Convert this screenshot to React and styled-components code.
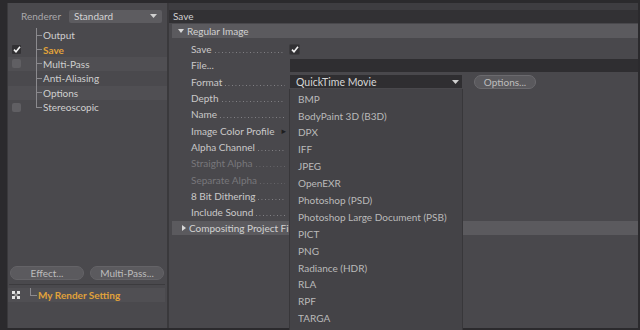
import React from 'react';
import styled, { createGlobalStyle } from 'styled-components';

const GlobalStyle = createGlobalStyle`
  html, body {
    margin: 0;
    padding: 0;
    background: #1f1f21;
  }
  * {
    box-sizing: border-box;
  }
`;

const treeItems = [
  { label: 'Output', box: null },
  { label: 'Save', box: 'checked', active: true },
  { label: 'Multi-Pass', box: 'empty', stripe: true },
  { label: 'Anti-Aliasing', box: null },
  { label: 'Options', box: null, stripe: true },
  { label: 'Stereoscopic', box: 'empty', last: true },
];

const formats = [
  'BMP',
  'BodyPaint 3D (B3D)',
  'DPX',
  'IFF',
  'JPEG',
  'OpenEXR',
  'Photoshop (PSD)',
  'Photoshop Large Document (PSB)',
  'PICT',
  'PNG',
  'Radiance (HDR)',
  'RLA',
  'RPF',
  'TARGA',
];

const Check = () => (
  <svg width="8" height="7" viewBox="0 0 8 7">
    <path d="M1 3.6 L3 5.8 L7 0.8" fill="none" stroke="#f2f2f2" strokeWidth="1.6" />
  </svg>
);

const Caret = () => (
  <svg width="7" height="4" viewBox="0 0 7 4">
    <path d="M0 0 L7 0 L3.5 4 Z" fill="#d0d0d0" />
  </svg>
);

const SettingIcon = () => (
  <svg width="8" height="8" viewBox="0 0 8 8">
    <rect x="0" y="0" width="3" height="3" fill="#e6e6e6" />
    <rect x="5" y="0" width="3" height="3" fill="#e6e6e6" />
    <rect x="2.5" y="2.5" width="3" height="3" fill="#9a9a9a" />
    <rect x="0" y="5" width="3" height="3" fill="#e6e6e6" />
    <rect x="5" y="5" width="3" height="3" fill="#e6e6e6" />
  </svg>
);

const App = () => {
  return (
    <>
      <GlobalStyle />
      <Window>
        <LeftPanel>
          <RendererRow>
            <RendererLabel>Renderer</RendererLabel>
            <RendererSelect>
              Standard
              <Caret />
            </RendererSelect>
          </RendererRow>

          <Tree>
            {treeItems.map((item) => (
              <TreeRow key={item.label} $stripe={item.stripe}>
                <BoxCell>
                  {item.box === 'checked' && (
                    <DarkBox>
                      <Check />
                    </DarkBox>
                  )}
                  {item.box === 'empty' && <EmptyBox />}
                </BoxCell>
                <Branch $last={item.last} />
                <TreeLabel $active={item.active}>{item.label}</TreeLabel>
              </TreeRow>
            ))}
          </Tree>

          <Spacer />

          <ButtonRow>
            <PillButton>Effect...</PillButton>
            <PillButton>Multi-Pass...</PillButton>
          </ButtonRow>
          <Separator />
          <SettingRow>
            <BoxCell $narrow>
              <SettingIcon />
            </BoxCell>
            <Branch $last $small />
            <TreeLabel $active>My Render Setting</TreeLabel>
          </SettingRow>
        </LeftPanel>

        <PanelDivider />

        <RightPanel>
          <TopGap />
          <PanelHeader>Save</PanelHeader>
          <GroupBar>
            <Triangle $open />
            Regular Image
          </GroupBar>

          <Params>
            <ParamLabel>
              Save<Leader />
            </ParamLabel>
            <ParamValue>
              <DarkBox $edge>
                <Check />
              </DarkBox>
            </ParamValue>

            <ParamLabel>
              File...
            </ParamLabel>
            <ParamValue>
              <FileField />
            </ParamValue>

            <ParamLabel>
              Format<Leader />
            </ParamLabel>
            <ParamValue>
              <SelectWrap>
                <FormatSelect>
                  QuickTime Movie
                  <Caret />
                </FormatSelect>
                <Popup>
                  {formats.map((f) => (
                    <PopupItem key={f}>{f}</PopupItem>
                  ))}
                </Popup>
              </SelectWrap>
              <OptionsButton>Options...</OptionsButton>
            </ParamValue>

            <ParamLabel>
              Depth<Leader />
            </ParamLabel>
            <ParamValue />

            <ParamLabel>
              Name<Leader />
            </ParamLabel>
            <ParamValue />

            <ParamLabel>
              Image Color Profile
              <SubArrow>▸</SubArrow>
            </ParamLabel>
            <ParamValue />

            <ParamLabel>
              Alpha Channel<Leader />
            </ParamLabel>
            <ParamValue />

            <ParamLabel $dim>
              Straight Alpha<Leader $dim />
            </ParamLabel>
            <ParamValue />

            <ParamLabel $dim>
              Separate Alpha<Leader $dim />
            </ParamLabel>
            <ParamValue />

            <ParamLabel>
              8 Bit Dithering<Leader />
            </ParamLabel>
            <ParamValue />

            <ParamLabel>
              Include Sound<Leader />
            </ParamLabel>
            <ParamValue />
          </Params>

          <GroupBar $collapsed>
            <Triangle />
            Compositing Project File
          </GroupBar>
        </RightPanel>
        <RightEdge />
      </Window>
    </>
  );
};

export default App;

const Window = styled.div`
  width: 640px;
  height: 330px;
  display: flex;
  background: #2b2a2d;
  padding: 3px 0 2px 7px;
  overflow: hidden;
  font-family: Lato, 'Open Sans', 'DejaVu Sans', sans-serif;
  font-size: 10px;
  color: #c8c8c8;
`;

const LeftPanel = styled.div`
  width: 160px;
  display: flex;
  flex-direction: column;
  background: #4a494d;
  border-left: 1px solid #3a393c;
`;

const RendererRow = styled.div`
  height: 25px;
  display: flex;
  align-items: center;
  padding: 0 5px 0 13px;
  gap: 8px;
`;

const RendererLabel = styled.span`
  color: #a9a8ab;
  font-size: 10px;
`;

const RendererSelect = styled.div`
  flex: 1;
  height: 13px;
  margin-top: 1px;
  display: flex;
  align-items: center;
  justify-content: space-between;
  padding: 0 5px 0 5px;
  background: #5d5c60;
  border-radius: 2px;
  color: #d4d4d4;
  font-size: 10px;
`;

const Tree = styled.div`
  display: flex;
  flex-direction: column;
`;

const TreeRow = styled.div`
  height: 14.4px;
  display: flex;
  align-items: stretch;
  background: ${(p) => (p.$stripe ? '#504f53' : 'transparent')};
`;

const BoxCell = styled.div`
  width: ${(p) => (p.$narrow ? '22px' : '28px')};
  display: flex;
  align-items: center;
  padding-left: 4px;
`;

const Branch = styled.span`
  width: ${(p) => (p.$small ? '7px' : '6px')};
  flex-shrink: 0;
  background:
    linear-gradient(#8b8a8e, #8b8a8e) left top / 1px ${(p) => (p.$last ? '50%' : '100%')} no-repeat,
    linear-gradient(#8b8a8e, #8b8a8e) left center / 100% 1px no-repeat;
`;

const TreeLabel = styled.span`
  display: flex;
  align-items: center;
  padding-left: 1px;
  color: ${(p) => (p.$active ? '#e0a23a' : '#cfcfcf')};
  font-weight: ${(p) => (p.$active ? 700 : 400)};
`;

const DarkBox = styled.span`
  width: 9px;
  height: 9px;
  display: inline-flex;
  align-items: center;
  justify-content: center;
  background: #323134;
  border-radius: 1px;
  box-shadow: ${(p) => (p.$edge ? '0 0 0 1px #3c3b3e' : 'none')};
`;

const EmptyBox = styled.span`
  width: 9px;
  height: 9px;
  display: inline-block;
  background: #605f63;
  border-radius: 2px;
`;

const Spacer = styled.div`
  flex: 1;
`;

const ButtonRow = styled.div`
  display: flex;
  gap: 6px;
  padding: 0 3px 0 2px;
  margin-bottom: 4px;
`;

const PillButton = styled.button`
  flex: 1;
  height: 14px;
  padding: 0;
  border: 1px solid #646367;
  border-radius: 7px;
  background: #5b5a5e;
  color: #bdbdbd;
  font-family: inherit;
  font-size: 10px;
  line-height: 12px;
`;

const Separator = styled.div`
  height: 1px;
  margin: 0 2px 3px 1px;
  background: #3c3b3e;
`;

const SettingRow = styled.div`
  height: 14px;
  display: flex;
  align-items: stretch;
  margin: 0 2px 26px 0;
  background: #504f53;
`;

const PanelDivider = styled.div`
  width: 2px;
  background: #3a393c;
`;

const RightPanel = styled.div`
  flex: 1;
  display: flex;
  flex-direction: column;
  background: #49484c;
`;

const RightEdge = styled.div`
  width: 2px;
  background: #2b2a2d;
`;

const TopGap = styled.div`
  height: 7px;
  background: #3e3d41;
`;

const PanelHeader = styled.div`
  height: 13px;
  display: flex;
  align-items: center;
  padding: 0 0 1px 4px;
  background: #323134;
  color: #d0d0d0;
  margin-bottom: 1px;
`;

const GroupBar = styled.div`
  height: 14px;
  display: flex;
  align-items: center;
  gap: 3px;
  margin-left: 3px;
  padding-left: ${(p) => (p.$collapsed ? '10px' : '6px')};
  background: #5b5a5e;
  color: #d2d2d2;
`;

const Triangle = styled.span`
  width: 0;
  height: 0;
  border-style: solid;
  border-color: transparent;
  ${(p) =>
    p.$open
      ? `border-width: 4px 3px 0 3px; border-top-color: #d8d8d8;`
      : `border-width: 3px 0 3px 4px; border-left-color: #d8d8d8;`}
`;

const Params = styled.div`
  display: grid;
  grid-template-columns: 97px 1fr;
  grid-auto-rows: 16.3px;
  column-gap: 2px;
  padding: 3px 0 1px 22px;
`;

const ParamLabel = styled.div`
  display: flex;
  align-items: center;
  white-space: nowrap;
  color: ${(p) => (p.$dim ? '#78777b' : '#c9c9c9')};
`;

const Leader = styled.span`
  flex: 1;
  align-self: stretch;
  margin: 0 3px 4px 3px;
  background-image: linear-gradient(to right, ${(p) => (p.$dim ? '#67666a' : '#858488')} 1px, transparent 1px);
  background-size: 3.5px 1px;
  background-repeat: repeat-x;
  background-position: left bottom;
`;

const SubArrow = styled.span`
  margin-left: auto;
  margin-right: 2px;
  font-size: 9px;
  color: #1e1e20;
`;

const ParamValue = styled.div`
  display: flex;
  align-items: center;
  gap: 12px;
  min-width: 0;
`;

const FileField = styled.div`
  flex: 1;
  height: 13px;
  background: #2f2e31;
`;

const SelectWrap = styled.div`
  position: relative;
  width: 172px;
  height: 13px;
`;

const FormatSelect = styled.div`
  height: 13px;
  display: flex;
  align-items: center;
  justify-content: space-between;
  padding: 0 3px 0 6px;
  background: #2f2e31;
  color: #d6d6d6;
  font-size: 10.5px;
`;

const Popup = styled.div`
  position: absolute;
  z-index: 5;
  top: 14px;
  left: -1px;
  width: 174px;
  height: 250px;
  padding-top: 1px;
  background: #444347;
  border: 1px solid #38373a;
  border-top: none;
`;

const PopupItem = styled.div`
  height: 16.9px;
  display: flex;
  align-items: center;
  padding-left: 8px;
  color: #bababa;
  white-space: nowrap;
`;

const OptionsButton = styled.button`
  width: 62px;
  height: 14px;
  padding: 0;
  border: 1px solid #6b6a6e;
  border-radius: 7px;
  background: #5a595d;
  color: #bebebe;
  font-family: inherit;
  font-size: 10px;
  line-height: 12px;
`;
